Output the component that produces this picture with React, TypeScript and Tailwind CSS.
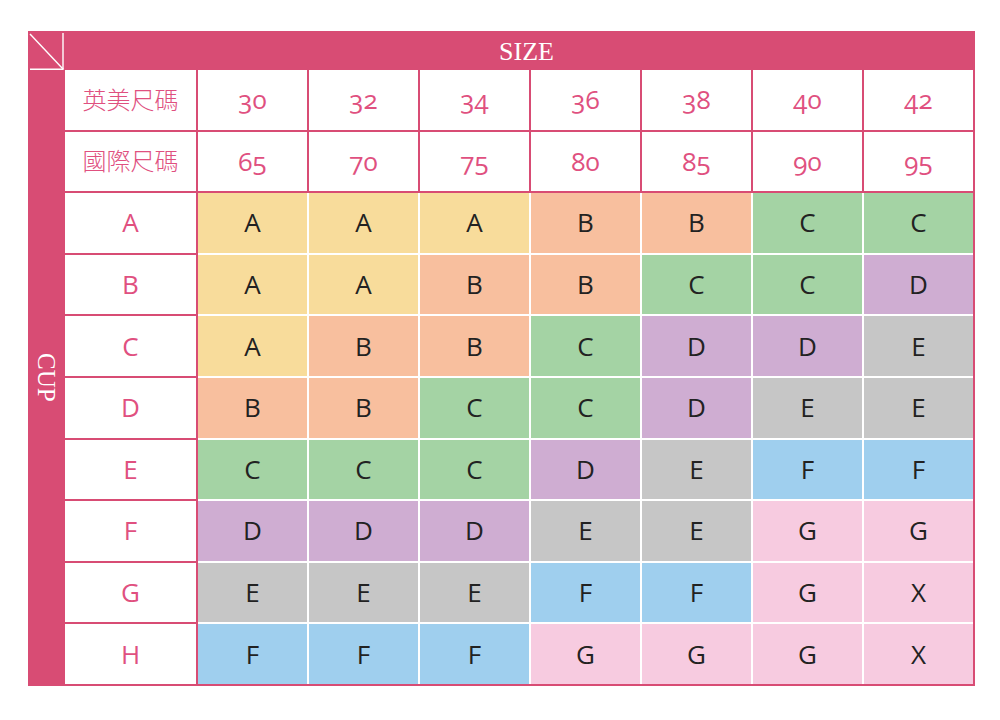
const PINK = 'bg-[#d84c74]'

const sizesUS = ['30', '32', '34', '36', '38', '40', '42']
const sizesIntl = ['65', '70', '75', '80', '85', '90', '95']
const cups = ['A', 'B', 'C', 'D', 'E', 'F', 'G', 'H']

const chart = [
  'AAABBCC',
  'AABBCCD',
  'ABBCDDE',
  'BBCCDEE',
  'CCCDEFF',
  'DDDEEGG',
  'EEEFFGX',
  'FFFGGGX',
]

// every class written out so tailwind picks them up
const cellColors: Record<string, string> = {
  A: 'bg-[#f8dc9b]',
  B: 'bg-[#f8bf9e]',
  C: 'bg-[#a4d3a4]',
  D: 'bg-[#cfadd2]',
  E: 'bg-[#c6c6c6]',
  F: 'bg-[#9fcfee]',
  G: 'bg-[#f7cbe0]',
  X: 'bg-[#f7cbe0]',
}

const font = { fontFamily: '"Open Sans", "Noto Sans CJK TC", sans-serif' }

function Corner() {
  return (
    <svg width="36" height="39" viewBox="0 0 36 39" className="block">
      <line x1="2" y1="3" x2="35" y2="38" stroke="white" strokeWidth="1.4" />
      <line x1="35" y1="2" x2="35" y2="38.5" stroke="white" strokeWidth="1.4" />
      <line x1="2" y1="38.3" x2="35.5" y2="38.3" stroke="white" strokeWidth="1.4" />
    </svg>
  )
}

function LabelCell({ children, cjk }: { children: React.ReactNode; cjk?: boolean }) {
  return (
    <div
      className={`bg-white flex items-center justify-center text-[#e0507f] ${
        cjk ? 'text-[24px] font-light' : 'text-[26px]'
      }`}
    >
      {children}
    </div>
  )
}

export default function App() {
  return (
    <div className="min-h-screen bg-white pt-[31px] pl-[28px]" style={font}>
      <div className={`w-[947px] ${PINK} pr-[2px] pb-[2px] flex flex-col`}>
        {/* Top bar */}
        <div className="flex h-[39px]">
          <div className="w-[36px]">
            <Corner />
          </div>
          <div
            className="flex-1 flex items-center justify-center pl-[16px] pt-[2px] text-white text-[26px] leading-none"
            style={{ fontFamily: '"Liberation Serif", serif' }}
          >
            SIZE
          </div>
        </div>

        {/* Body */}
        <div className="flex">
          <div className="w-[37px] flex items-center justify-center">
            <span
              className="text-white text-[25px] leading-none [writing-mode:vertical-rl] pr-[1px]"
              style={{ fontFamily: '"Liberation Serif", serif' }}
            >
              CUP
            </span>
          </div>

          <div className="grid grid-cols-[131px_repeat(7,109px)] grid-rows-[repeat(10,minmax(0,1fr))] gap-[2px] h-[614px]">
            <LabelCell cjk>英美尺碼</LabelCell>
            {sizesUS.map((s) => (
              <LabelCell key={'us' + s}>
                <span className="oldstyle-nums">{s}</span>
              </LabelCell>
            ))}

            <LabelCell cjk>國際尺碼</LabelCell>
            {sizesIntl.map((s) => (
              <LabelCell key={'in' + s}>
                <span className="oldstyle-nums">{s}</span>
              </LabelCell>
            ))}

            {/* Cup labels column */}
            <div className="row-span-8 grid grid-rows-[repeat(8,minmax(0,1fr))] gap-[2px]">
              {cups.map((c) => (
                <LabelCell key={c}>{c}</LabelCell>
              ))}
            </div>

            {/* Colored chart */}
            <div className="col-span-7 row-span-8 grid grid-cols-7 grid-rows-[repeat(8,minmax(0,1fr))] gap-[2px] bg-white">
              {chart.map((row, r) =>
                row.split('').map((v, c) => (
                  <div
                    key={r + '-' + c}
                    className={`${cellColors[v]} flex items-center justify-center text-[26px] text-[#222]`}
                  >
                    {v}
                  </div>
                ))
              )}
            </div>
          </div>
        </div>
      </div>
    </div>
  )
}
